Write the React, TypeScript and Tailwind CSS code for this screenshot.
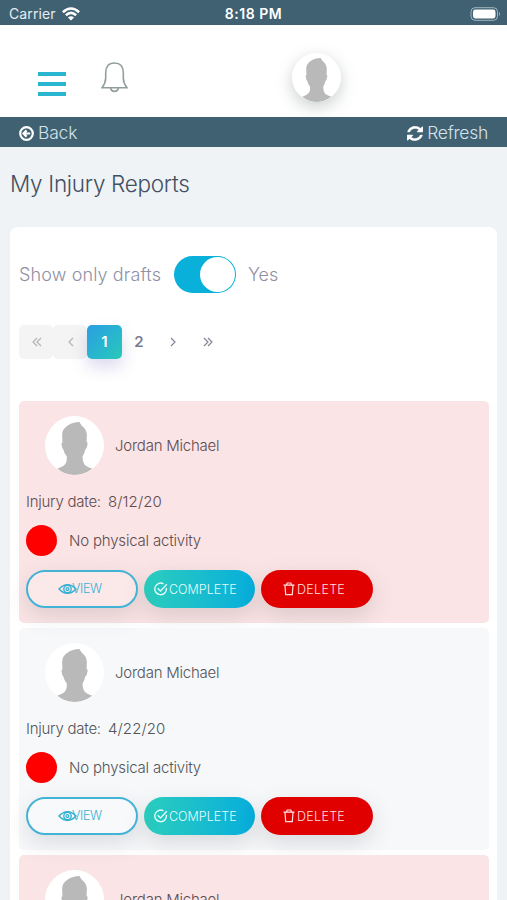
import React from "react";

function Avatar({ className }: { className: string }) {
  return (
    <svg viewBox="0 0 176 176" className={`block shrink-0 rounded-full bg-white ${className}`}>
      <path
        fill="#b9b9b9"
        d="M103 18 Q106 24 110 29 Q123 38 125 56 L124 77 Q129 79 126 88 Q125 99 120 101 Q118 112 112 121 Q112 138 119 146 Q126 152 141 157 Q116 176 88 176 Q60 176 37 157 Q54 151 60 144 Q66 137 65 121 Q57 112 55 101 Q51 98 50 88 Q47 80 52 78 L51 56 Q52 38 67 29 Q82 18 103 18Z"
      />
    </svg>
  );
}

function EyeIcon() {
  return (
    <svg width="19" height="12" viewBox="0 0 19 12" fill="none" stroke="#36afd2" className="block">
      <path d="M1 6Q5 1.7 9.5 1.7T18 6Q14 10.3 9.5 10.3T1 6Z" strokeWidth="1.4" />
      <circle cx="9.5" cy="6" r="3.7" strokeWidth="1.4" />
      <circle cx="9.5" cy="6" r="1.4" strokeWidth="1.2" />
    </svg>
  );
}

function CheckIcon() {
  return (
    <svg width="14" height="14" viewBox="0 0 14 14" fill="none" stroke="#e3fbfb" strokeWidth="1.4" className="block shrink-0">
      <path d="M12.3 5.8A5.8 5.8 0 1 1 9.4 1.8" />
      <path d="M3.7 6.2L6.5 8.9L12.8 2.3" />
    </svg>
  );
}

function TrashIcon() {
  return (
    <svg width="12" height="14" viewBox="0 0 12 14" fill="none" stroke="#ffe3e3" strokeWidth="1.2" className="block shrink-0">
      <path d="M.5 3.2H11.5M3.4 3L4.2 1H7.8L8.6 3M2 3.5L2.7 12.6H9.3L10 3.5" />
    </svg>
  );
}

function Report({ date, tone }: { date: string; tone: string }) {
  return (
    <div className={`flex h-[222px] shrink-0 flex-col rounded-[5px] pl-[7px] pt-[15px] text-[15px] leading-[20px] ${tone}`}>
      <div className="flex h-[59px] items-center pl-[19px]">
        <Avatar className="size-[59px]" />
        <span className="ml-[11px] whitespace-nowrap tracking-[-0.23px]">Jordan Michael</span>
      </div>
      <div className="mt-[17px] flex h-5 whitespace-nowrap">
        <span className="w-[82px] tracking-[-0.25px]">Injury date:</span>
        <span className="tracking-[0.1px]">{date}</span>
      </div>
      <div className="mt-[13px] flex h-[31px] items-center">
        <span className="size-[31px] rounded-full bg-[#ff0000]" />
        <span className="ml-3 whitespace-nowrap tracking-[-0.19px]">No physical activity</span>
      </div>
      <div className="mt-[14px] flex h-[38px] gap-[6px] text-[12.5px] font-light leading-none">
        <button className="relative flex w-[112px] items-center rounded-full border-2 border-[#43b3d5] bg-white/20 pl-[44px] pt-[1px] text-[#36afd2] shadow-[0_8px_22px_rgba(70,70,80,0.15)]">
          <span className="absolute left-[30px] top-[11px]"><EyeIcon /></span>
          <span className="tracking-[-0.35px]">VIEW</span>
        </button>
        <button className="flex w-[111px] items-center rounded-full bg-linear-to-r from-[#2bcdbd] to-[#06addb] pl-[10px] text-[#e3fbfb] shadow-[0_8px_22px_rgba(70,70,80,0.17)]">
          <CheckIcon />
          <span className="ml-[1px] pt-[2px]">COMPLETE</span>
        </button>
        <button className="flex w-[112px] items-center rounded-full bg-[#e00000] pl-[22px] text-[#ffdede] shadow-[0_8px_22px_rgba(70,70,80,0.17)]">
          <TrashIcon />
          <span className="ml-[2px] pt-[2px] tracking-[0.3px]">DELETE</span>
        </button>
      </div>
    </div>
  );
}

function Chevrons({ d, color }: { d: string; color: string }) {
  return (
    <svg width="12" height="12" viewBox="0 0 12 12" fill="none" stroke={color} strokeWidth="1.2">
      <path d={d} />
    </svg>
  );
}

export default function App() {
  return (
    <div className="flex h-[900px] w-[507px] flex-col overflow-hidden bg-[#eff3f6] font-['Inter','Liberation_Sans',sans-serif]">
      <div className="grid h-[25px] shrink-0 grid-cols-3 items-center bg-[#3f6172] px-[9px] pt-[2px] text-[14px] text-[#e5edf2]">
        <div className="flex items-center gap-[6px]">
          <span className="tracking-[0.1px]">Carrier</span>
          <svg width="18" height="14" viewBox="0 0 18 14" fill="none" stroke="#fff" strokeWidth="2.6">
            <path d="M.9 5.2Q9-2.2 17.1 5.2M3.9 8.3Q9 3.6 14.1 8.3" />
            <path d="M9 13.4L5.9 10.4Q9 7.9 12.1 10.4Z" fill="#fff" stroke="none" />
          </svg>
        </div>
        <span className="text-center text-[14px] font-semibold tracking-[0.5px] text-white">8:18 PM</span>
        <svg width="31" height="14" viewBox="0 0 31 14" className="-mr-[3px] justify-self-end">
          <rect x="1" y=".7" width="26.5" height="12.6" rx="4" fill="none" stroke="#a4b5bf" strokeWidth="1" />
          <rect x="3" y="2.6" width="22.5" height="8.8" rx="2.3" fill="#fff" />
          <path d="M29 5Q31 7 29 9Z" fill="#a4b5bf" />
        </svg>
      </div>

      <header className="flex h-[92px] shrink-0 items-start bg-white pl-[38px]">
        <div className="mt-[47px] flex w-[28px] flex-col gap-[6px]">
          <span className="h-[4px] bg-[#2ab5d1]" />
          <span className="h-[4px] bg-[#2ab5d1]" />
          <span className="h-[4px] bg-[#2ab5d1]" />
        </div>
        <svg width="27" height="31" viewBox="0 0 27 31" fill="none" stroke="#929e9e" strokeWidth="1.6" className="ml-[35px] mt-[37px]">
          <path d="M1 25.7Q4.7 21 4.7 16V10.7Q4.700 1 13.5 1T22.3 10.7V16Q22.300 21 26 25.7Z" />
          <path d="M9.6 26Q10.2 29.4 13.5 29.4T17.4 26" />
        </svg>
        <Avatar className="ml-[164px] mt-[28px] size-[49px] shadow-[0_5px_16px_rgba(60,90,75,0.28)]" />
      </header>

      <div className="flex h-[30px] shrink-0 items-center justify-between bg-[#3f6172] pl-[19px] pr-[19px] pt-[2px] text-[17.5px] font-light text-[#d5e3ea]">
        <div className="flex items-center gap-1">
          <svg width="15" height="15" viewBox="0 0 15 15" fill="none" stroke="#fff" strokeWidth="2.2">
            <circle cx="7.5" cy="7.5" r="6.3" />
            <path d="M11.2 7.5H4.6M7.6 4.4L4.5 7.5L7.6 10.6" />
          </svg>
          <span className="tracking-[-0.2px]">Back</span>
        </div>
        <div className="flex items-center gap-1">
          <svg width="16" height="15" viewBox="0 0 512 512" preserveAspectRatio="none" fill="#fff" stroke="#fff" strokeWidth="14">
            <path d="M483.5 28.5 431.4 80.6C387.5 38.4 327 12 260 12 142 12 44 92 17 201h74C115 133 181 83 260 83c46 0 88 18 119 48l-53 53c-9 9-3 24 10 24h160c8 0 14-6 14-14V39c0-13-17-20-26.500-10.500ZM28.500 483.500 80.600 431.400C124 474 185 500 252 500c118 0 216-80 243-189h-74c-24 68-90 118-169 118-46 0-88-18-119-48l53-53c9-9 3-24-10-24H16c-8 0-14 6-14 14v155c0 13 17 20 26.500 10.500Z" />
          </svg>
          <span className="tracking-[-0.25px]">Refresh</span>
        </div>
      </div>

      <h1 className="ml-[10px] mt-[21px] h-[32px] shrink-0 whitespace-nowrap text-[22.5px] font-light leading-[32px] tracking-[-0.3px] text-[#414f63]">
        My Injury Reports
      </h1>

      <main className="ml-[10px] mt-[27px] flex h-[720px] w-[487px] shrink-0 flex-col rounded-t-[8px] bg-white px-[9px] pt-[29px]">
        <div className="flex h-[37px] shrink-0 items-center whitespace-nowrap text-[18px] text-[#9090a4]">
          <span className="w-[155px] font-light tracking-[0.12px]">Show only drafts</span>
          <span className="flex h-[37px] w-[62px] items-center justify-end rounded-full bg-[#08b0da] pr-[1px]">
            <span className="size-[35px] rounded-full bg-white" />
          </span>
          <span className="ml-3 font-light">Yes</span>
        </div>
        <nav className="mt-[32px] flex h-[34px] shrink-0 text-[15px] font-semibold text-[#7c7c91]">
          <span className="flex w-[34px] items-center justify-center rounded-[5px] bg-[#f4f4f4] pl-[2px]">
            <Chevrons color="#b4b4b8" d="M6 2L2 6L6 10M10 2L6 6L10 10" />
          </span>
          <span className="flex w-[34px] items-center justify-center rounded-[5px] bg-[#f4f4f4] pl-[2px]">
            <Chevrons color="#b4b4b8" d="M8 2L4 6L8 10" />
          </span>
          <span className="flex w-[35px] items-center justify-center rounded-[5px] bg-linear-to-br from-[#2c9de3] to-[#2bc9b9] text-white shadow-[0_8px_16px_rgba(110,100,190,0.24)]">1</span>
          <span className="flex w-[34px] items-center justify-center">2</span>
          <span className="flex w-[34px] items-center justify-center">
            <Chevrons color="#85859a" d="M4 2L8 6L4 10" />
          </span>
          <span className="flex w-[35px] items-center justify-center">
            <Chevrons color="#85859a" d="M2 2L6 6L2 10M6 2L10 6L6 10" />
          </span>
        </nav>
        <div className="mt-[42px] flex w-[470px] shrink-0 flex-col gap-[5px] font-light">
          <Report date="8/12/20" tone="bg-[#fae4e5] text-[#5d4c4f]" />
          <Report date="4/22/20" tone="bg-[#f6f8fa] text-[#525559]" />
          <div className="flex h-[45px] overflow-hidden rounded-t-[5px] bg-[#fae4e5] pl-[26px] pt-[15px] text-[15px] text-[#5d4c4f]">
            <Avatar className="size-[59px]" />
            <span className="ml-[11px] whitespace-nowrap leading-[59px] tracking-[-0.23px]">Jordan Michael</span>
          </div>
        </div>
      </main>
    </div>
  );
}
